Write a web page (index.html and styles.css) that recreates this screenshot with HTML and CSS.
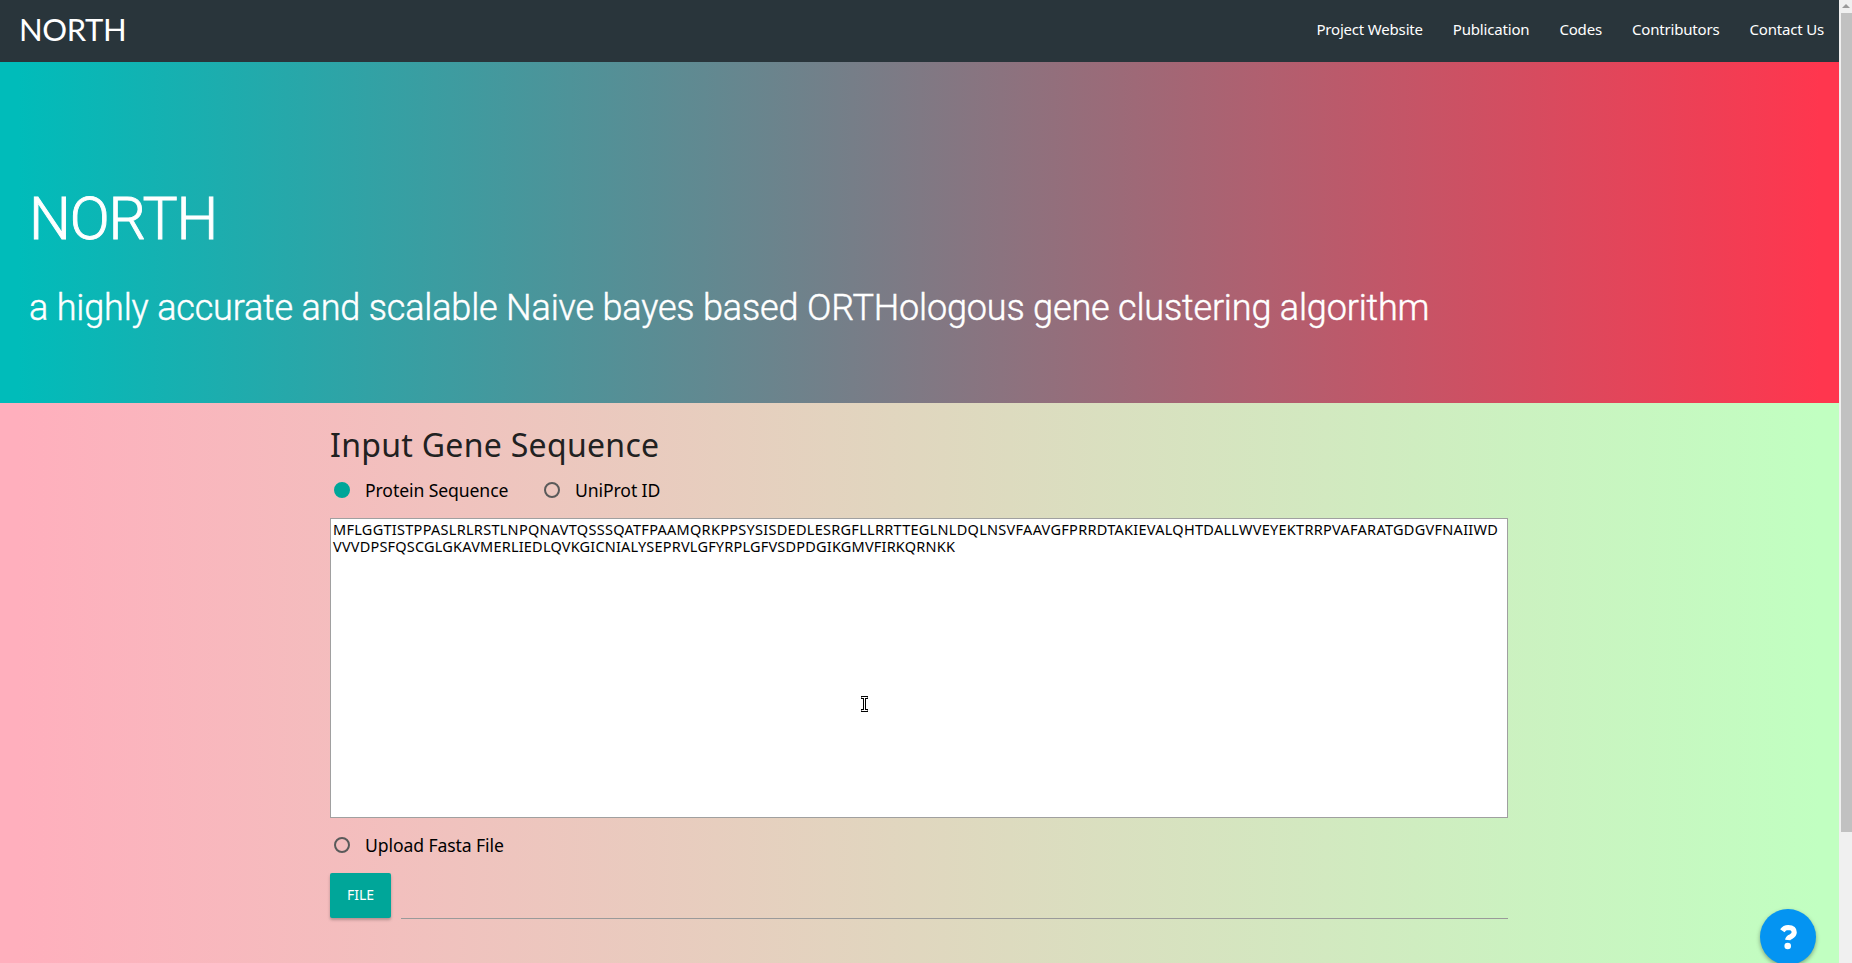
FILE: index.html
```
<!DOCTYPE html>
<html lang="en">
<head>
<meta charset="utf-8">
<title>NORTH</title>
<link rel="stylesheet" href="styles.css">
</head>
<body>
<div class="window">
  <div class="page">
    <nav class="navbar">
      <a class="brand">NORTH</a>
      <ul class="links">
        <li>Project Website</li>
        <li>Publication</li>
        <li>Codes</li>
        <li>Contributors</li>
        <li>Contact Us</li>
      </ul>
    </nav>
    <header class="hero">
      <h1>NORTH</h1>
      <p>a highly accurate and scalable Naive bayes based ORTHologous gene clustering algorithm</p>
    </header>
    <main class="content">
      <h2>Input Gene Sequence</h2>
      <div class="options">
        <label class="option protein"><i class="radio checked"></i><span>Protein Sequence</span></label>
        <label class="option"><i class="radio"></i><span>UniProt ID</span></label>
      </div>
      <div class="sequence">MFLGGTISTPPASLRLRSTLNPQNAVTQSSSQATFPAAMQRKPPSYSISDEDLESRGFLLRRTTEGLNLDQLNSVFAAVGFPRRDTAKIEVALQHTDALLWVEYEKTRRPVAFARATGDGVFNAIIWD<br><span class="tail">VVVDPSFQSCGLGKAVMERLIEDLQVKGICNIALYSEPRVLGFYRPLGFVSDPDGIKGMVFIRKQRNKK</span></div>
      <label class="option upload"><i class="radio"></i><span>Upload Fasta File</span></label>
      <div class="file-row">
        <div class="file-button">FILE</div>
        <div class="file-path"></div>
      </div>
    </main>
  </div>
  <div class="scrollbar"><div class="arrow"></div><div class="thumb"></div></div>
</div>
<svg class="pointer" viewBox="0 0 9 18" width="9" height="18"><path d="M1 2.500H8M1 15.500H8M4.500 2V16" fill="none" stroke="#000" stroke-width="3"/><path d="M1.500 2.500H7.500M1.500 15.500H7.500M4.500 2.500V15.500" fill="none" stroke="#fff" stroke-width="1"/></svg>
<div class="help">
  <svg viewBox="0 0 56 56" width="56" height="56"><path d="M22.300 21.800Q24.500 18.500 28.200 18.500Q34.200 18.700 34.200 23.300Q34.200 26 31 27.600Q27.800 29 27.700 31" fill="none" stroke="#fff" stroke-width="5.200" stroke-linejoin="round"/><circle cx="27.700" cy="37" r="3.300" fill="#fff"/></svg>
</div>
</body>
</html>
```
FILE: styles.css
```
* { box-sizing: border-box; }
body { margin: 0; font-family: "Noto Sans", sans-serif; color: #000; overflow: hidden; }
.window { display: flex; width: 1852px; height: 963px; }
.page { width: 1839px; display: flex; flex-direction: column; background: linear-gradient(90deg, #ffafbd 1%, #c1ffc1 99%); }
.navbar { height: 62px; background: #29353b; color: #fff; display: flex; justify-content: space-between; }
.brand { padding-left: 19px; font: 31px/58px "Lato", sans-serif; letter-spacing: -.4px; }
.links { margin: 0; padding: 0; list-style: none; display: flex; font-size: 15px; line-height: 58px; letter-spacing: -.18px; white-space: nowrap; }
.links li { padding: 0 15px; }
.hero { height: 341px; padding: 106px 0 0 29px; background: linear-gradient(90deg, #00bcba 1%, #ff364e 99%); color: #fff; font-family: "Roboto", sans-serif; font-weight: 300; -webkit-text-stroke: .45px #fff; }
.hero h1 { margin: 0; font-size: 59px; line-height: 101px; font-weight: 300; letter-spacing: -1.2px; -webkit-text-stroke: .9px #fff; }
.hero p { margin: 0; font-size: 36px; line-height: 79px; letter-spacing: -.17px; white-space: nowrap; }
.content { width: 1178px; margin-left: 330px; }
h2 { margin: 0; padding-top: 18px; height: 73px; font-size: 32px; line-height: 48px; font-weight: 400; letter-spacing: .3px; color: #212121; }
.options { display: flex; height: 42px; }
.option { display: flex; align-items: center; height: 28px; font-size: 17.6px; line-height: 28px; letter-spacing: -.1px; padding-left: 4px; }
.protein { width: 210px; }
.radio { width: 16px; height: 16px; border: 2px solid #5a5a5a; border-radius: 50%; margin-right: 15px; }
.checked { background: #00a699; border-color: #00a699; }
.sequence { height: 300px; border: 1px solid #a0a0a0; background: #fff; padding: 2px; font-size: 14.5px; line-height: 17px; letter-spacing: .28px; white-space: nowrap; }
.tail { letter-spacing: .2px; }
.upload { margin-top: 13px; }
.file-row { display: flex; gap: 10px; margin-top: 14px; height: 46px; }
.file-button { width: 61px; height: 45px; border-radius: 2px; background: #00a699; color: #fff; text-align: center; font-size: 14px; line-height: 44px; box-shadow: 0 2px 3px rgba(0,0,0,.25); }
.file-path { flex: 1; border-bottom: 1px solid #9a9a9a; }
.scrollbar { width: 13px; background: #f0f0f0; padding-left: 2px; }
.arrow { width: 8px; height: 13px; margin-left: 1px; background: #9a9a9a; clip-path: polygon(50% 4px, 100% 8px, 0 8px); }
.thumb { height: 819px; background: #c1c1c1; }
.pointer { position: absolute; left: 860px; top: 695px; }
.help { position: absolute; left: 1760px; top: 909px; width: 56px; height: 56px; border-radius: 50%; background: #0494f2; box-shadow: 0 2px 4px rgba(0,0,0,.35); }
```
